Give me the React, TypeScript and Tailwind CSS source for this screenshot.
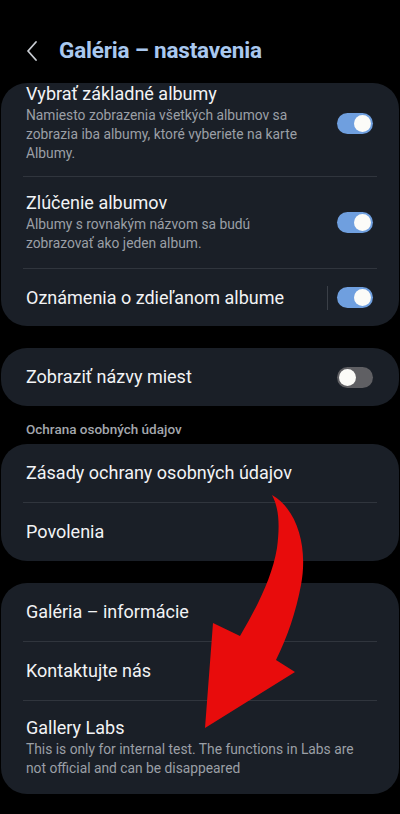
import React from 'react'

const font = { fontFamily: 'Roboto, "Noto Sans", sans-serif' }

function Toggle({ on }: { on: boolean }): React.JSX.Element {
  return (
    <div
      className={`w-[36px] h-[21px] rounded-full flex items-center px-[2px] shrink-0 ${
        on ? 'bg-[#6f9fdf] justify-end' : 'bg-[#5f5f63] justify-start'
      }`}
    >
      <div className="w-[17px] h-[17px] rounded-full bg-[#fbfbf8]" />
    </div>
  )
}

function Row({
  title,
  sub,
  toggle,
  bar,
  className = '',
}: {
  title: string
  sub?: string
  toggle?: boolean
  bar?: boolean
  className?: string
}): React.JSX.Element {
  return (
    <div className={`flex items-center pl-[25px] pr-[26px] ${className}`}>
      <div className={`flex-1 min-w-0 ${toggle !== undefined ? 'pr-[30px]' : 'pr-2'}`}>
        <div className="text-[18px] leading-[22px] text-[#f2f3f5]">{title}</div>
        {sub && <div className="text-[13.8px] leading-[19px] text-[#9b9fa6] mt-[1px]">{sub}</div>}
      </div>
      {bar && <div className="w-px h-[24px] bg-[#3a3f47] mr-[9px]" />}
      {toggle !== undefined && <Toggle on={toggle} />}
    </div>
  )
}

function Divider(): React.JSX.Element {
  return <div className="mx-[22px] h-px bg-[#30353d]" />
}

export default function App(): React.JSX.Element {
  return (
    <div className="relative w-[400px] h-[814px] bg-black overflow-hidden" style={font}>
      <div className="h-[83px] flex items-center pl-[25px] pt-[18px]">
        <svg width="14" height="22" viewBox="0 0 14 22" fill="none" className="mr-[20px]">
          <path d="M11 2 L3 11 L11 20" stroke="#c9cdd3" strokeWidth="1.8" strokeLinecap="round" strokeLinejoin="round" />
        </svg>
        <span className="text-[22.5px] font-bold text-[#a9c8ef] tracking-[-0.2px]">Galéria – nastavenia</span>
      </div>

      <div className="flex flex-col px-[1px]">
        <div className="bg-[#1a1f27] rounded-[26px]">
          <Row
            className="pt-[0px] pb-[13px]"
            title="Vybrať základné albumy"
            sub="Namiesto zobrazenia všetkých albumov sa zobrazia iba albumy, ktoré vyberiete na karte Albumy."
            toggle
          />
          <Divider />
          <Row
            className="h-[91px]"
            title="Zlúčenie albumov"
            sub="Albumy s rovnakým názvom sa budú zobrazovať ako jeden album."
            toggle
          />
          <Divider />
          <Row className="h-[57px]" title="Oznámenia o zdieľanom albume" toggle bar />
        </div>

        <div className="bg-[#1a1f27] rounded-[26px] mt-[22px]">
          <Row className="h-[58px]" title="Zobraziť názvy miest" toggle={false} />
        </div>

        <div className="pl-[25px] pt-[13px] pb-[5px] text-[13.5px] font-medium text-[#a3a7ad]">
          Ochrana osobných údajov
        </div>

        <div className="bg-[#1a1f27] rounded-[26px]">
          <Row className="h-[58px]" title="Zásady ochrany osobných údajov" />
          <Divider />
          <Row className="h-[58px]" title="Povolenia" />
        </div>

        <div className="bg-[#1a1f27] rounded-[26px] mt-[22px]">
          <Row className="h-[58px]" title="Galéria – informácie" />
          <Divider />
          <Row className="h-[58px]" title="Kontaktujte nás" />
          <Divider />
          <Row
            className="pt-[16px] pb-[16px]"
            title="Gallery Labs"
            sub="This is only for internal test. The functions in Labs are not official and can be disappeared"
          />
        </div>
      </div>

      <svg className="absolute left-0 top-0 pointer-events-none" width="400" height="814" viewBox="0 0 400 814">
        <path
          d="M272 495 C298 510 308 548 301 585 C296 612 287 638 276 660 L295 672 L205 728 L213 623 L240 636 C257 607 272 578 277 548 C280 525 279 508 272 495 Z"
          fill="#e80c0c"
        />
      </svg>
    </div>
  )
}
